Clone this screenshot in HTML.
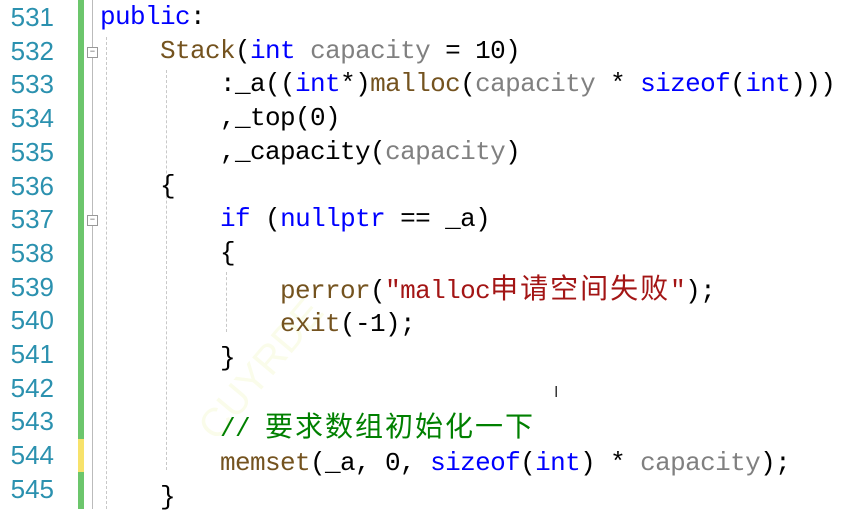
<!DOCTYPE html>
<html><head><meta charset="utf-8"><style>
body{margin:0;width:859px;height:509px;background:#fff;overflow:hidden;position:relative;font-family:"Liberation Mono","Noto Sans CJK SC",monospace;font-size:26px}
.ln{position:absolute;left:6px;width:48px;text-align:right;color:#2b91af;font-family:"Liberation Sans",sans-serif;font-size:26px;line-height:33.7px}
.c{position:absolute;left:100px;white-space:pre;line-height:33.7px;color:#000;letter-spacing:-0.6px}
.k{color:#0000ff}.f{color:#74531f}.p{color:#808080}.s{color:#a31515}.g{color:#008000}
.z{font-family:"Noto Sans CJK SC",sans-serif;font-size:28px;letter-spacing:2px}
.bar{position:absolute;left:78px;width:6px}
.dl{position:absolute;border-left:1px dashed #c8c8c8}
</style></head><body>
<div class="bar" style="top:0;height:439px;background:#6cc66c"></div>
<div class="bar" style="top:439px;height:33px;background:#f7e26b"></div>
<div class="bar" style="top:472px;height:37px;background:#6cc66c"></div>
<div style="position:absolute;left:92px;top:0;height:509px;border-left:1px solid #bbb"></div>
<div style="position:absolute;left:87px;top:47px;width:9px;height:9px;border:1px solid #999;background:#fff;font-size:9px;line-height:9px;text-align:center;color:#555">−</div>
<div style="position:absolute;left:87px;top:215px;width:9px;height:9px;border:1px solid #999;background:#fff;font-size:9px;line-height:9px;text-align:center;color:#555">−</div>
<div class="dl" style="left:106px;top:37px;height:472px"></div>
<div class="dl" style="left:166px;top:70px;height:400px"></div>
<div class="dl" style="left:226px;top:272px;height:60px"></div>
<div style="position:absolute;left:190px;top:420px;color:#fafcea;font-family:'Liberation Sans';font-size:40px;transform:rotate(-50deg);transform-origin:left top">CUYRDE</div>
<div class="ln" style="top:1px">531<br>532<br>533<br>534<br>535<br>536<br>537<br>538<br>539<br>540<br>541<br>542<br>543<br>544<br>545</div>
<div class="c" style="top:1px"><span class="k">public</span>:
    <span class="f">Stack</span>(<span class="k">int</span> <span class="p">capacity</span> = 10)
        :_a((<span class="k">int</span>*)<span class="f">malloc</span>(<span class="p">capacity</span> * <span class="k">sizeof</span>(<span class="k">int</span>)))
        ,_top(0)
        ,_capacity(<span class="p">capacity</span>)
    {
        <span class="k">if</span> (<span class="k">nullptr</span> == _a)
        {
            <span class="f">perror</span>(<span class="s">"malloc<span class="z">申请空间失败</span>"</span>);
            <span class="f">exit</span>(-1);
        }

        <span class="g">// <span class="z">要求数组初始化一下</span></span>
        <span class="f">memset</span>(_a, 0, <span class="k">sizeof</span>(<span class="k">int</span>) * <span class="p">capacity</span>);
    }</div>
<div style="position:absolute;left:554px;top:384px;font-size:16px;color:#333;font-family:'Liberation Sans'">I</div>
</body></html>
